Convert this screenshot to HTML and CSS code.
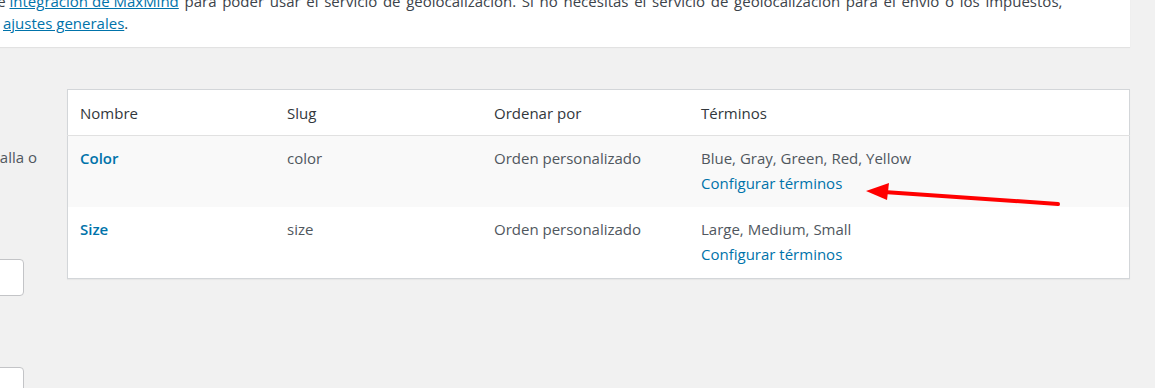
FILE: index.html
```html
<!DOCTYPE html>
<html>
<head>
    <title>Atributos</title>
    <link rel="stylesheet" href="styles.css">
</head>
<body>
    <div class="notice">
        <p>
            <span class="line-one">de <a href="#">integración de MaxMind</a><span class="rest"> para poder usar el servicio de geolocalización. Si no necesitas el servicio de geolocalización para el envío o los impuestos,</span></span><br>
            <span class="line-two"><a href="#">ajustes generales</a>.</span>
        </p>
    </div>

    <div class="wrap">
        <div class="col-left">
            <p class="description">Nombre mostrado en la pantalla o</p>
            <input type="text" class="field first">
            <input type="text" class="field second">
        </div>

        <div class="col-right">
            <table class="attributes">
                <thead>
                    <tr>
                        <th class="col-name">Nombre</th>
                        <th class="col-slug">Slug</th>
                        <th class="col-order">Ordenar por</th>
                        <th>Términos</th>
                    </tr>
                </thead>
                <tbody>
                    <tr class="alternate">
                        <td><a href="#" class="row-title">Color</a></td>
                        <td>color</td>
                        <td>Orden personalizado</td>
                        <td>Blue, Gray, Green, Red, Yellow<br><a href="#">Configurar términos</a></td>
                    </tr>
                    <tr>
                        <td><a href="#" class="row-title">Size</a></td>
                        <td>size</td>
                        <td>Orden personalizado</td>
                        <td>Large, Medium, Small<br><a href="#">Configurar términos</a></td>
                    </tr>
                </tbody>
            </table>
        </div>
    </div>

    <svg class="arrow" width="210" height="40" viewBox="855 175 210 40">
        <line x1="1058" y1="204" x2="884" y2="192" stroke="#ff0000" stroke-width="4" stroke-linecap="round"/>
        <polygon points="866,191 889,183 887,200" fill="#ff0000"/>
    </svg>
</body>
</html>
```

FILE: styles.css
```css
body {
    margin: 0;
    padding: 0;
    background-color: #f1f1f1;
    font-family: "Open Sans", Arial, sans-serif;
    font-size: 15px;
    color: #3c434a;
    position: relative;
    width: 1155px;
    height: 388px;
    overflow: hidden;
}

a {
    color: #0073aa;
    text-decoration: none;
}

.notice {
    background-color: #fff;
    margin: -10px 25px 0 0;
    padding: 0 0 13px;
    box-shadow: 0 1px 1px rgba(0, 0, 0, 0.06);
}

.notice p {
    margin: 0;
    line-height: 22px;
    white-space: nowrap;
}

.notice a {
    text-decoration: underline;
}

.line-one {
    margin-left: -12px;
}

.line-one .rest {
    word-spacing: 1.8px;
}

.line-two {
    margin-left: 3px;
}

.wrap {
    display: flex;
    margin-top: 42px;
}

.col-left {
    width: 250px;
    margin-left: -210px;
    flex-shrink: 0;
    text-align: right;
}

.description {
    margin: 57px 3px 0 0;
    line-height: 22px;
    color: #50575e;
    white-space: nowrap;
}

.field {
    display: block;
    box-sizing: border-box;
    width: 234px;
    height: 37px;
    border: 1px solid #c3c4c7;
    border-radius: 4px;
    background-color: #fff;
}

.field.first {
    margin-top: 91px;
}

.field.second {
    margin-top: 71px;
}

.col-right {
    margin-left: 27px;
}

.attributes {
    width: 1063px;
    border-collapse: collapse;
    background-color: #fff;
    border: 1px solid #d3d6d9;
    box-shadow: 0 1px 1px rgba(0, 0, 0, 0.04);
    table-layout: fixed;
}

.attributes th {
    text-align: left;
    font-weight: normal;
    color: #32373c;
    padding: 12px 12px 11px;
    line-height: 22px;
    border-bottom: 1px solid #e1e1e1;
}

.col-name,
.col-slug,
.col-order {
    width: 183px;
}

.attributes td {
    vertical-align: top;
    padding: 10px 12px 11px;
    line-height: 25px;
    color: #50575e;
}

.attributes tr.alternate td {
    background-color: #f9f9f9;
}

.row-title {
    font-weight: 600;
}

.arrow {
    position: absolute;
    left: 855px;
    top: 175px;
}
```
